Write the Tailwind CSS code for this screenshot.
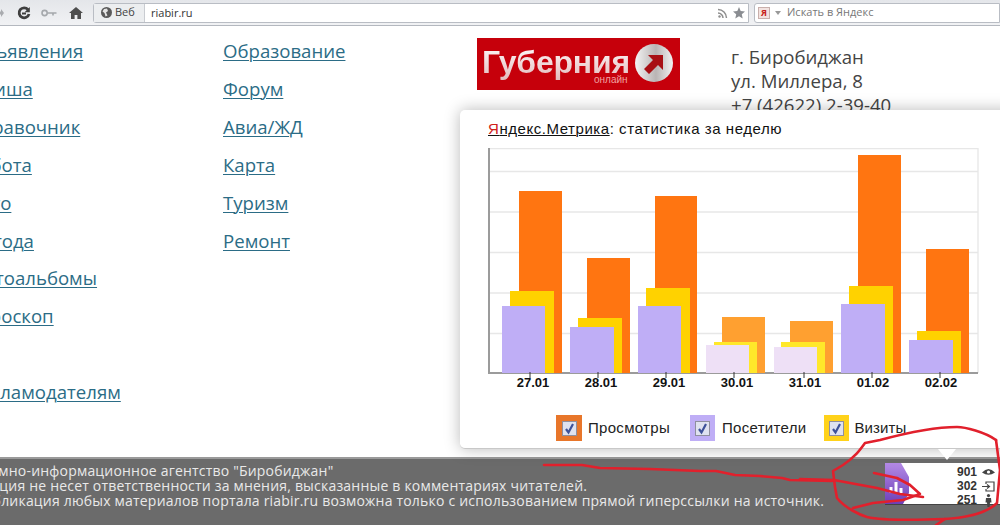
<!DOCTYPE html>
<html lang="ru">
<head>
<meta charset="UTF-8">
<title>riabir.ru</title>
<script src="https://cdn.jsdelivr.net/npm/@tailwindcss/browser@4"></script>
</head>
<body class="bg-white">
<div class="relative w-[1000px] h-[525px] overflow-hidden flex flex-col font-['Open_Sans',sans-serif]">

  <!-- browser toolbar -->
  <div class="h-[26px] shrink-0 flex items-center bg-gradient-to-b from-[#e4e6ea] to-[#f1f2f4] border-b border-[#b4b8bf]">
    <svg class="w-[4px] h-[8px] shrink-0" viewBox="0 0 4 8" fill="#a9abaf"><path d="M0 2.5 H1 V0 L4 4 L1 8 V5.5 H0 Z"/></svg>
    <svg class="w-[14px] h-[14px] ml-[13px] text-[#3f3f3f]" viewBox="0 0 14 14" fill="none" stroke="currentColor" stroke-width="2.8"><path d="M11 3.6 A5 5 0 1 0 12 8"/><path d="M12.8 1 V6.2 H7.6" fill="currentColor" stroke="none"/><path d="M5 7.5 H9" stroke-width="2"/></svg>
    <svg class="w-[16px] h-[8px] ml-[10px]" viewBox="0 0 16 8" fill="none" stroke="#a5a8ac" stroke-width="1.6"><circle cx="3.6" cy="4" r="2.6"/><path d="M6.5 4 H15.5 M12 4 V6.5"/></svg>
    <svg class="w-[14px] h-[12px] ml-[12px]" viewBox="0 0 14 12" fill="#4e4e4e"><path d="M7 0 L14 6 H12 V12 H8.4 V8 H5.6 V12 H2 V6 H0 Z"/></svg>
    <div class="ml-[10px] flex-1 h-[20px] flex bg-white border border-[#b9bdc4] rounded-l-[3px]">
      <div class="w-[51px] shrink-0 flex items-center gap-[3px] pl-[7px] bg-[#eceef0] border-r border-[#c9ccd1] text-[11px] text-[#444]">
        <svg class="w-[11px] h-[11px]" viewBox="0 0 11 11"><circle cx="5.5" cy="5.5" r="5.5" fill="#5a5a5a"/><path d="M3 2 L6 1.5 L7 4 L5 5.5 L6.5 8.5 L4.5 9.5 L3.5 6 L1.5 4.5 Z" fill="#e4e4e4"/></svg>
        <span>Веб</span>
      </div>
      <div class="flex-1 pl-[6px] text-[11px] leading-[18px] text-[#333]">riabir.ru</div>
      <div class="flex items-center gap-[5px] pr-[3px]">
        <svg class="w-[10px] h-[10px]" viewBox="0 0 10 10" fill="none" stroke="#8e8e8e" stroke-width="1.5"><circle cx="1.5" cy="8.5" r="1.2" fill="#8e8e8e" stroke="none"/><path d="M0 5 A5 5 0 0 1 5 10"/><path d="M0 1.5 A8.5 8.5 0 0 1 8.5 10"/></svg>
        <svg class="w-[12px] h-[12px]" viewBox="0 0 12 12" fill="#8a8d92"><path d="M6 0 L7.7 4 L12 4.4 L8.8 7.2 L9.7 11.5 L6 9.2 L2.3 11.5 L3.2 7.2 L0 4.4 L4.3 4 Z"/></svg>
      </div>
    </div>
    <div class="ml-[5px] w-[246px] h-[20px] flex items-center bg-white border border-[#b9bdc4] rounded-l-[3px] text-[11px] text-[#777]">
      <div class="ml-[3px] w-[12px] h-[12px] flex items-center justify-center bg-[#f3e3e0] border border-[#c9b0ac] text-[9px] font-bold leading-none text-[#c8201a]">Я</div>
      <svg class="w-[6px] h-[4px] ml-[5px]" viewBox="0 0 6 4" fill="#999"><path d="M0 0 H6 L3 4 Z"/></svg>
      <span class="ml-[6px]">Искать в Яндекс</span>
    </div>
  </div>

  <!-- page content -->
  <div class="flex-1 flex text-[18.6px] leading-[37.9px] text-[#2b6c86] pt-[6px]">
    <div class="w-[254px] -ml-[31px] shrink-0 flex flex-col">
      <a class="underline underline-offset-2 decoration-1">Объявления</a>
      <a class="underline underline-offset-2 decoration-1">Афиша</a>
      <a class="underline underline-offset-2 decoration-1">Справочник</a>
      <a class="underline underline-offset-2 decoration-1">Работа</a>
      <a class="underline underline-offset-2 decoration-1">Авто</a>
      <a class="underline underline-offset-2 decoration-1">Погода</a>
      <a class="underline underline-offset-2 decoration-1">Фотоальбомы</a>
      <a class="underline underline-offset-2 decoration-1">Гороскоп</a>
      <a class="h-[37.9px]"></a>
      <a class="underline underline-offset-2 decoration-1">Рекламодателям</a>
    </div>
    <div class="w-[254px] shrink-0 flex flex-col">
      <a class="underline underline-offset-2 decoration-1">Образование</a>
      <a class="underline underline-offset-2 decoration-1">Форум</a>
      <a class="underline underline-offset-2 decoration-1">Авиа/ЖД</a>
      <a class="underline underline-offset-2 decoration-1">Карта</a>
      <a class="underline underline-offset-2 decoration-1">Туризм</a>
      <a class="underline underline-offset-2 decoration-1">Ремонт</a>
    </div>
    <div class="w-[203px] h-[52px] mt-[6px] shrink-0 relative bg-[#c6000b] overflow-hidden font-['Liberation_Sans',sans-serif]">
      <span class="absolute left-[5px] top-[5px] text-[32px] leading-[38px] font-bold tracking-[-0.2px] text-transparent bg-clip-text bg-gradient-to-b from-white to-[#e2b9bb]">Губерния</span>
      <span class="absolute left-[117px] top-[36px] text-[10px] leading-[12px] text-[#f0a0a0]">онлайн</span>
      <svg class="absolute left-[158px] top-[6px] w-[38px] h-[38px]" viewBox="0 0 38 38">
        <defs><linearGradient id="disc" x1="0" x2="1" y1="0" y2="0"><stop offset="0" stop-color="#f4f4f4"/><stop offset="0.55" stop-color="#b9b4b4"/><stop offset="1" stop-color="#f2f2f2"/></linearGradient></defs>
        <circle cx="19" cy="19" r="19" fill="url(#disc)"/>
        <path d="M13 11 H28 V26 L23 21 L14 30 L9 25 L18 16 Z" fill="#a80f14"/>
      </svg>
    </div>
    <div class="ml-[51px] mt-[7px] text-[18.6px] leading-[24px] text-[#444]">
      <p class="mt-[6px]">г. Биробиджан</p>
      <p>ул. Миллера, 8</p>
      <p>+7 (42622) 2-39-40</p>
    </div>
  </div>

  <!-- footer bar -->
  <div class="relative h-[68px] shrink-0 flex justify-between bg-[#6b6b6b] border-t-2 border-[#9a9a9a] text-[14px] leading-[15px] tracking-[0.2px] text-[#e9e9e9]">
    <div class="pt-[4px] whitespace-nowrap">
      <p class="-ml-[42px]">Рекламно-информационное агентство "Биробиджан"</p>
      <p class="-ml-[41px]">Редакция не несет ответственности за мнения, высказанные в комментариях читателей.</p>
      <p class="-ml-[25px]">Публикация любых материалов портала riabir.ru возможна только с использованием прямой гиперссылки на источник.</p>
    </div>
    <div class="mt-[4px] w-[115px] h-[42px] flex bg-white border-b border-[#444] tracking-normal font-['Liberation_Sans',sans-serif]">
      <svg class="w-[25px] h-[41px] shrink-0" viewBox="0 0 25 41">
        <defs><linearGradient id="tag" x1="0" x2="0" y1="0" y2="1"><stop offset="0" stop-color="#b48ae6"/><stop offset="1" stop-color="#6d3fb8"/></linearGradient></defs>
        <path d="M0 0 H16 L24 14 V30 L18 41 H0 Z" fill="url(#tag)"/>
        <path d="M6 30 V24 M11 30 V19 M16 30 V25" stroke="#fff" stroke-width="3"/>
      </svg>
      <div class="flex-1 flex flex-col items-end pr-[5px] pt-[2px] text-[12px] leading-[14px] font-bold text-[#333]">
        <div class="flex items-center gap-[5px]"><span>901</span>
          <svg class="w-[13px] h-[9px]" viewBox="0 0 13 9"><path d="M0 4.5 Q6.5 -2.5 13 4.5 Q6.5 9 0 4.5 Z" fill="#444"/><circle cx="6.5" cy="4" r="1.6" fill="#fff"/></svg></div>
        <div class="flex items-center gap-[5px]"><span>302</span>
          <svg class="w-[13px] h-[11px]" viewBox="0 0 13 11" fill="none" stroke="#444" stroke-width="1.2"><path d="M4 3 V1 H12 V10 H4 V8"/><path d="M0 5.5 H7 M5 3.5 L7.5 5.5 L5 7.5"/></svg></div>
        <div class="flex items-center gap-[5px]"><span>251</span>
          <svg class="w-[13px] h-[13px]" viewBox="0 0 13 13" fill="#444"><circle cx="6.5" cy="1.6" r="1.6"/><path d="M4 4 H9 L9.5 8.5 H8 L7.6 13 H5.4 L5 8.5 H3.5 Z"/></svg></div>
      </div>
    </div>
  </div>

  <!-- metrika popup -->
  <div class="absolute left-[460px] top-[110px] w-[560px] h-[339px] bg-white rounded-[5px] border-b border-[#c8c8c8] shadow-[0_0_16px_rgba(0,0,0,0.28)] pl-[28px] pt-[10px] font-['Liberation_Sans',sans-serif]">
    <div class="text-[15px] leading-[18px] tracking-[0.55px] text-[#111]">
      <span class="underline decoration-1"><span class="text-[#d0201a]">Я</span>ндекс.Метрика</span>: статистика за неделю
    </div>
    <svg class="block mt-[10px] w-[491px] h-[226px]" viewBox="488 148 491 226">
      <path d="M488 148.5 H978 V373 M488 171.5 H978 M488 212 H978 M488 252.5 H978 M488 293 H978 M488 333.5 H978" stroke="#e7e7e7" stroke-width="1.3" fill="none"/>
      <path d="M489 148 V373 H978" stroke="#9b9b9b" stroke-width="2" fill="none"/>

      <rect x="519" y="191" width="43" height="182" fill="#ff7511"/>
      <rect x="510" y="291" width="44" height="82" fill="#ffd200"/>
      <rect x="502" y="306" width="43" height="67" fill="#bfaef6"/>

      <rect x="587" y="258" width="43" height="115" fill="#ff7511"/>
      <rect x="578" y="318" width="44" height="55" fill="#ffd200"/>
      <rect x="570" y="327" width="44" height="46" fill="#bfaef6"/>

      <rect x="655" y="196" width="42" height="177" fill="#ff7511"/>
      <rect x="646" y="288" width="44" height="85" fill="#ffd200"/>
      <rect x="638" y="306" width="43" height="67" fill="#bfaef6"/>

      <rect x="722" y="317" width="43" height="56" fill="#ffa030"/>
      <rect x="714" y="342" width="43" height="31" fill="#ffe82a"/>
      <rect x="706" y="345" width="43" height="28" fill="#eee0f6"/>

      <rect x="790" y="321" width="43" height="52" fill="#ffa030"/>
      <rect x="781" y="342" width="44" height="31" fill="#ffe82a"/>
      <rect x="774" y="347" width="43" height="26" fill="#eee0f6"/>

      <rect x="858" y="155" width="43" height="218" fill="#ff7511"/>
      <rect x="849" y="286" width="44" height="87" fill="#ffd200"/>
      <rect x="841" y="304" width="44" height="69" fill="#bfaef6"/>

      <rect x="926" y="249" width="43" height="124" fill="#ff7511"/>
      <rect x="917" y="331" width="44" height="42" fill="#ffd200"/>
      <rect x="909" y="340" width="44" height="33" fill="#bfaef6"/>
    </svg>
    <div class="flex ml-[11px] w-[476px] text-[13px] leading-[14px] font-bold text-[#111] mt-[2px]">
      <div class="w-[68px] text-center">27.01</div>
      <div class="w-[68px] text-center">28.01</div>
      <div class="w-[68px] text-center">29.01</div>
      <div class="w-[68px] text-center">30.01</div>
      <div class="w-[68px] text-center">31.01</div>
      <div class="w-[68px] text-center">01.02</div>
      <div class="w-[68px] text-center">02.02</div>
    </div>
    <div class="flex items-center mt-[25px] ml-[68px] text-[15px] leading-[18px] tracking-[0.3px] text-[#222]">
      <div class="w-[26px] h-[26px] flex items-center justify-center bg-[#e8762a]">
        <svg class="w-[15px] h-[15px]" viewBox="0 0 15 15"><rect x="0.5" y="0.5" width="14" height="14" fill="#dfe2f0" stroke="#8f8f9f"/><path d="M4 8 L6.5 11.5 L11 3" fill="none" stroke="#3d5199" stroke-width="2.2"/></svg>
      </div>
      <span class="ml-[6px]">Просмотры</span>
      <div class="ml-[20px] w-[25px] h-[26px] flex items-center justify-center bg-[#bfaef6]">
        <svg class="w-[15px] h-[15px]" viewBox="0 0 15 15"><rect x="0.5" y="0.5" width="14" height="14" fill="#dfe2f0" stroke="#8f8f9f"/><path d="M4 8 L6.5 11.5 L11 3" fill="none" stroke="#3d5199" stroke-width="2.2"/></svg>
      </div>
      <span class="ml-[7px]">Посетители</span>
      <div class="ml-[18px] w-[25px] h-[26px] flex items-center justify-center bg-[#ffd21a]">
        <svg class="w-[15px] h-[15px]" viewBox="0 0 15 15"><rect x="0.5" y="0.5" width="14" height="14" fill="#dfe2f0" stroke="#8f8f9f"/><path d="M4 8 L6.5 11.5 L11 3" fill="none" stroke="#3d5199" stroke-width="2.2"/></svg>
      </div>
      <span class="ml-[5px] tracking-[0.1px]">Визиты</span>
    </div>
  </div>

  <!-- popup tail and hand drawn marks lie over everything -->
  <svg class="absolute inset-0 w-[1000px] h-[525px] pointer-events-none" viewBox="0 0 1000 525" fill="none">
    <path d="M938 449 L947 460 L956 449 Z" fill="#fff"/>
    <path d="M530 372 v6 M598 372 v6 M666 372 v6 M734 372 v6 M804 372 v6 M872 372 v6 M940 372 v6" stroke="#333"/>
    <g stroke="#e1202c" stroke-width="2.6" stroke-linecap="round" stroke-linejoin="round">
      <path d="M544 465 L582 465 L600 468 L650 469 L700 471 L716 471 L735 475 L760 476 L782 478 L790 480 L832 481"/>
      <path d="M996 440 C985 432 965 427 957 427 C935 427 910 432 880 440 L865 443 C860 450 855 457 843 465 L833 471 L835 487 L837 498 C845 508 860 515 867 517 C885 521 920 520 945 519 L936 525"/>
      <path d="M996 440 L1000 470 L997 503 C990 510 975 517 945 519"/>
      <path d="M800 479 L834 480 L850 483 L877 488 L900 494 L923 497"/>
      <path d="M874 473 L897 478 L910 485 L920 494 L903 500 L873 503 L853 508"/>
    </g>
  </svg>
</div>
</body>
</html>
